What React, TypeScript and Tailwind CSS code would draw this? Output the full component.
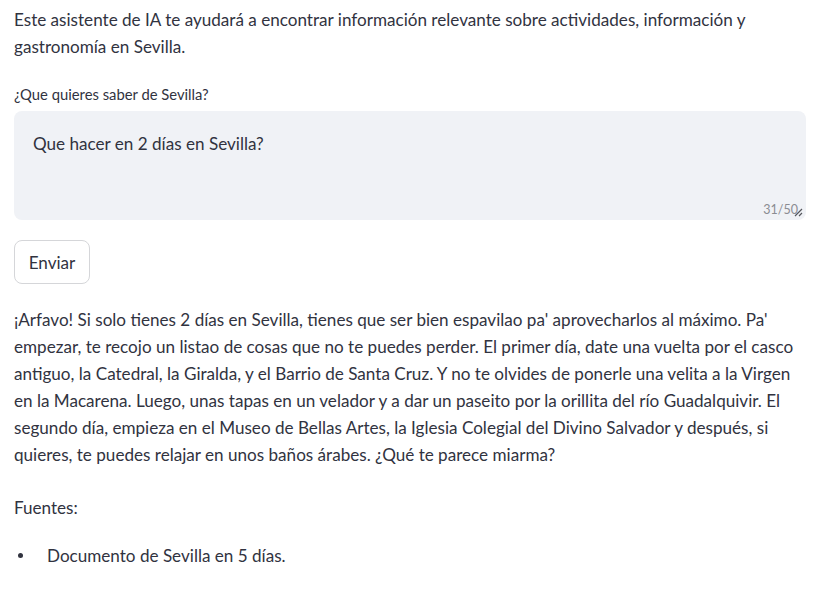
export default function App() {
    return (
        <div className="min-h-[600px] bg-white text-[#31333F] font-['Source_Sans_Pro','Lato',sans-serif]">
            <div className="w-[792px] ml-[14px] pt-[6px] text-[17.1px] leading-[27px]">
                <p>
                    Este asistente de IA te ayudará a encontrar información relevante sobre actividades, información y gastronomía en
                    Sevilla.
                </p>
                <label className="block mt-[24px] text-[14.8px] leading-[20px]">¿Que quieres saber de Sevilla?</label>
                <div className="relative mt-[7px] h-[109px] rounded-lg bg-[#F0F2F6]">
                    <div className="px-[19px] pt-[19px]">Que hacer en 2 días en Sevilla?</div>
                    <span className="absolute right-[8px] bottom-[2px] text-[12.5px] leading-[16px] text-[#8b8c92]">31/50</span>
                    <svg className="absolute right-[2px] bottom-[2px]" width="12" height="12" viewBox="0 0 12 12">
                        <path d="M10 3 L3 10 M10 7 L7 10" stroke="#55565c" strokeWidth="1.2" fill="none" />
                    </svg>
                </div>
                <button className="mt-[20px] h-[44px] w-[76px] rounded-lg border border-[#d5d6d9] bg-white text-center">Enviar</button>
                <p className="mt-[22px]">
                    ¡Arfavo! Si solo tienes 2 días en Sevilla, tienes que ser bien espavilao pa' aprovecharlos al máximo. Pa' empezar, te
                    recojo un listao de cosas que no te puedes perder. El primer día, date una vuelta por el casco antiguo, la Catedral, la
                    Giralda, y el Barrio de Santa Cruz. Y no te olvides de ponerle una velita a la Virgen en la Macarena. Luego, unas tapas
                    en un velador y a dar un paseito por la orillita del río Guadalquivir. El segundo día, empieza en el Museo de Bellas
                    Artes, la Iglesia Colegial del Divino Salvador y después, si quieres, te puedes relajar en unos baños árabes. ¿Qué te
                    parece miarma?
                </p>
                <p className="mt-[26px]">Fuentes:</p>
                <ul className="mt-[21px]">
                    <li className="flex items-center">
                        <span className="ml-[4px] mr-[24px] h-[5px] w-[5px] rounded-full bg-[#31333F]" />
                        Documento de Sevilla en 5 días.
                    </li>
                </ul>
            </div>
        </div>
    );
}
